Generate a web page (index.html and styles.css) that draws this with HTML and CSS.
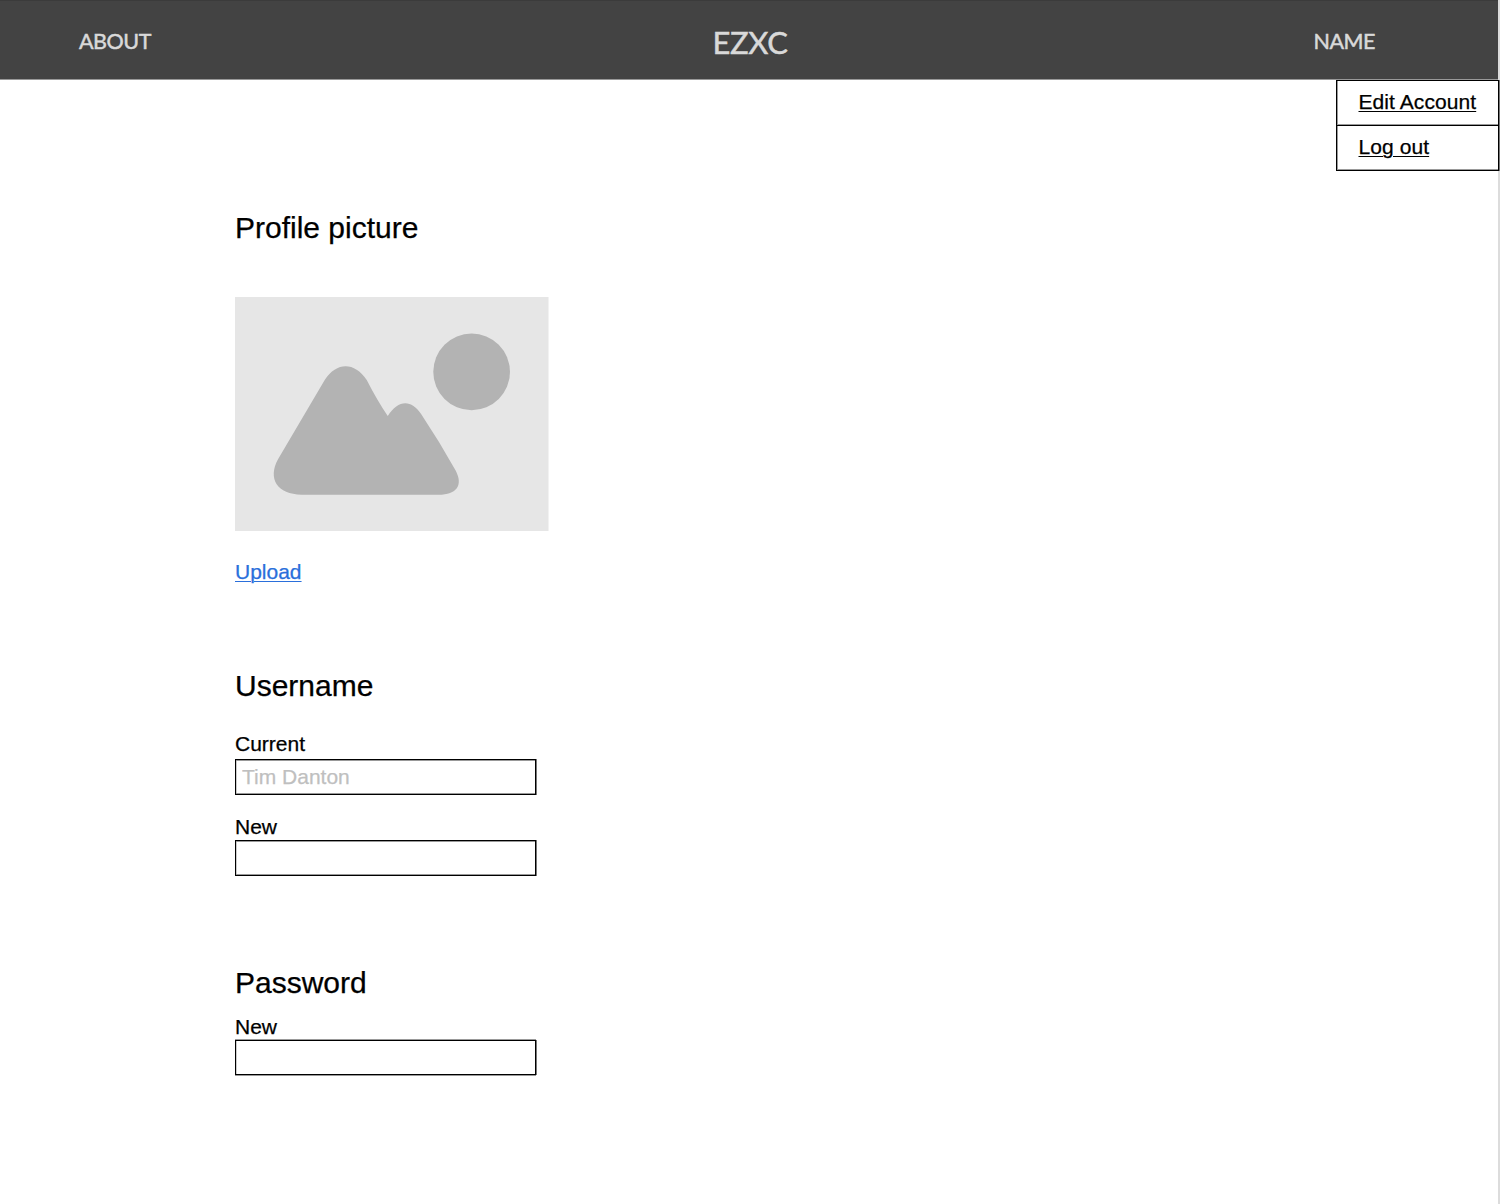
FILE: index.html
```html
<!DOCTYPE html>
<html lang="en">
<head>
<meta charset="utf-8">
<title>EZXC</title>
<link rel="stylesheet" href="styles.css">
</head>
<body>
<div class="page">
  <header class="topbar">
    <a class="nav-item">ABOUT</a>
    <a class="brand">EZXC</a>
    <a class="nav-item nav-name">NAME</a>
    <nav class="menu">
      <a class="menu-item" href="#"><span>Edit Account</span></a>
      <a class="menu-item" href="#"><span>Log out</span></a>
    </nav>
  </header>
  <main class="content">
    <section class="picture">
      <h2>Profile picture</h2>
      <svg class="placeholder" viewBox="0 0 940 702" preserveAspectRatio="none" aria-hidden="true">
        <rect width="940" height="702" fill="#e6e6e6"/>
        <circle cx="709.5" cy="224.5" r="115" fill="#b3b3b3"/>
        <path d="M269 249C305 194 358 194 395 249Q426 310 458 357C489 308 528 306 558 351Q612 432 662 521C684 564 666 593 610 593H200C127 593 97 545 129 487Z" fill="#b3b3b3"/>
      </svg>
      <a class="upload" href="#">Upload</a>
    </section>
    <section class="username">
      <h2>Username</h2>
      <label class="field field-current">Current<input type="text" placeholder="Tim Danton"></label>
      <label class="field">New<input type="text"></label>
    </section>
    <section class="password">
      <h2>Password</h2>
      <label class="field">New<input type="password"></label>
    </section>
  </main>
</div>
</body>
</html>
```
FILE: styles.css
```css
* { box-sizing: border-box; }

body {
  margin: 0;
  background: #fff;
  color: #000;
  font: 21px/24px "Liberation Sans", Arial, sans-serif;
  -webkit-text-stroke: 0.25px;
}

.page {
  height: 1204px;
  border-right: 2px solid #dcdcdc;
}

.topbar {
  position: relative;
  display: grid;
  grid-template-columns: 1fr auto 1fr;
  align-items: center;
  height: 80px;
  padding: 3px 123px 0 79px;
  background: #434343;
  border-top: 1px solid #3b3b3b;
  border-bottom: 1px solid #999;
  color: #d9d9d9;
  font-family: Lato, sans-serif;
}

.nav-item {
  padding-bottom: 2px;
  font-size: 21.5px;
  letter-spacing: -0.45px;
  -webkit-text-stroke: 0.5px;
}

.nav-name { justify-self: end; }

.brand {
  padding: 1px 0 0 46px;
  font-size: 31px;
  line-height: 38px;
  letter-spacing: -0.4px;
  -webkit-text-stroke: 0.5px;
}

.menu {
  position: absolute;
  top: 79px;
  right: -1px;
  width: 163px;
  font-family: "Liberation Sans", Arial, sans-serif;
}

.menu-item {
  display: block;
  height: 46px;
  padding: 9px 0 0 21.5px;
  border: 1px solid #000;
  box-shadow: 1px 0 #777, inset 1px 0 #999, inset 0 -1px #999;
  background: #fff;
  color: #000;
  letter-spacing: 0.08px;
}

.menu-item + .menu-item { margin-top: -1px; }

a { text-decoration-thickness: 1px; text-underline-offset: 2px; }

.content { padding: 131px 0 0 235px; }

h2 { margin: 0; font-size: 30px; font-weight: 400; line-height: 34px; }

.placeholder { display: block; width: 313.5px; height: 234px; margin-top: 52px; }
.upload { display: block; width: max-content; margin-top: 29px; color: #2a6fdb; }

.username { margin-top: 85px; }
.password { margin-top: 90px; }

.field { display: block; width: 302px; margin-top: 20px; }
.field-current { margin-top: 29px; }
.password .field { margin-top: 15px; }

input {
  display: block;
  width: 301px;
  height: 36px;
  margin-top: 1px;
  padding: 0 6px;
  border: 1px solid #000;
  border-radius: 0;
  box-shadow: 1px 0 #777, inset 0 1px #999, inset 0 -1px #999, inset 1px 0 #ccc;
  background: #fff;
  font: inherit;
}

.field-current input { margin-top: 3px; }

.password input {
  height: 35px;
  box-shadow: 1px 0 #777, 0 1px #999, 0 -1px #999, inset 1px 0 #ccc;
}

input::placeholder { color: #bfbfbf; opacity: 1; -webkit-text-stroke: 0.25px; }
```
